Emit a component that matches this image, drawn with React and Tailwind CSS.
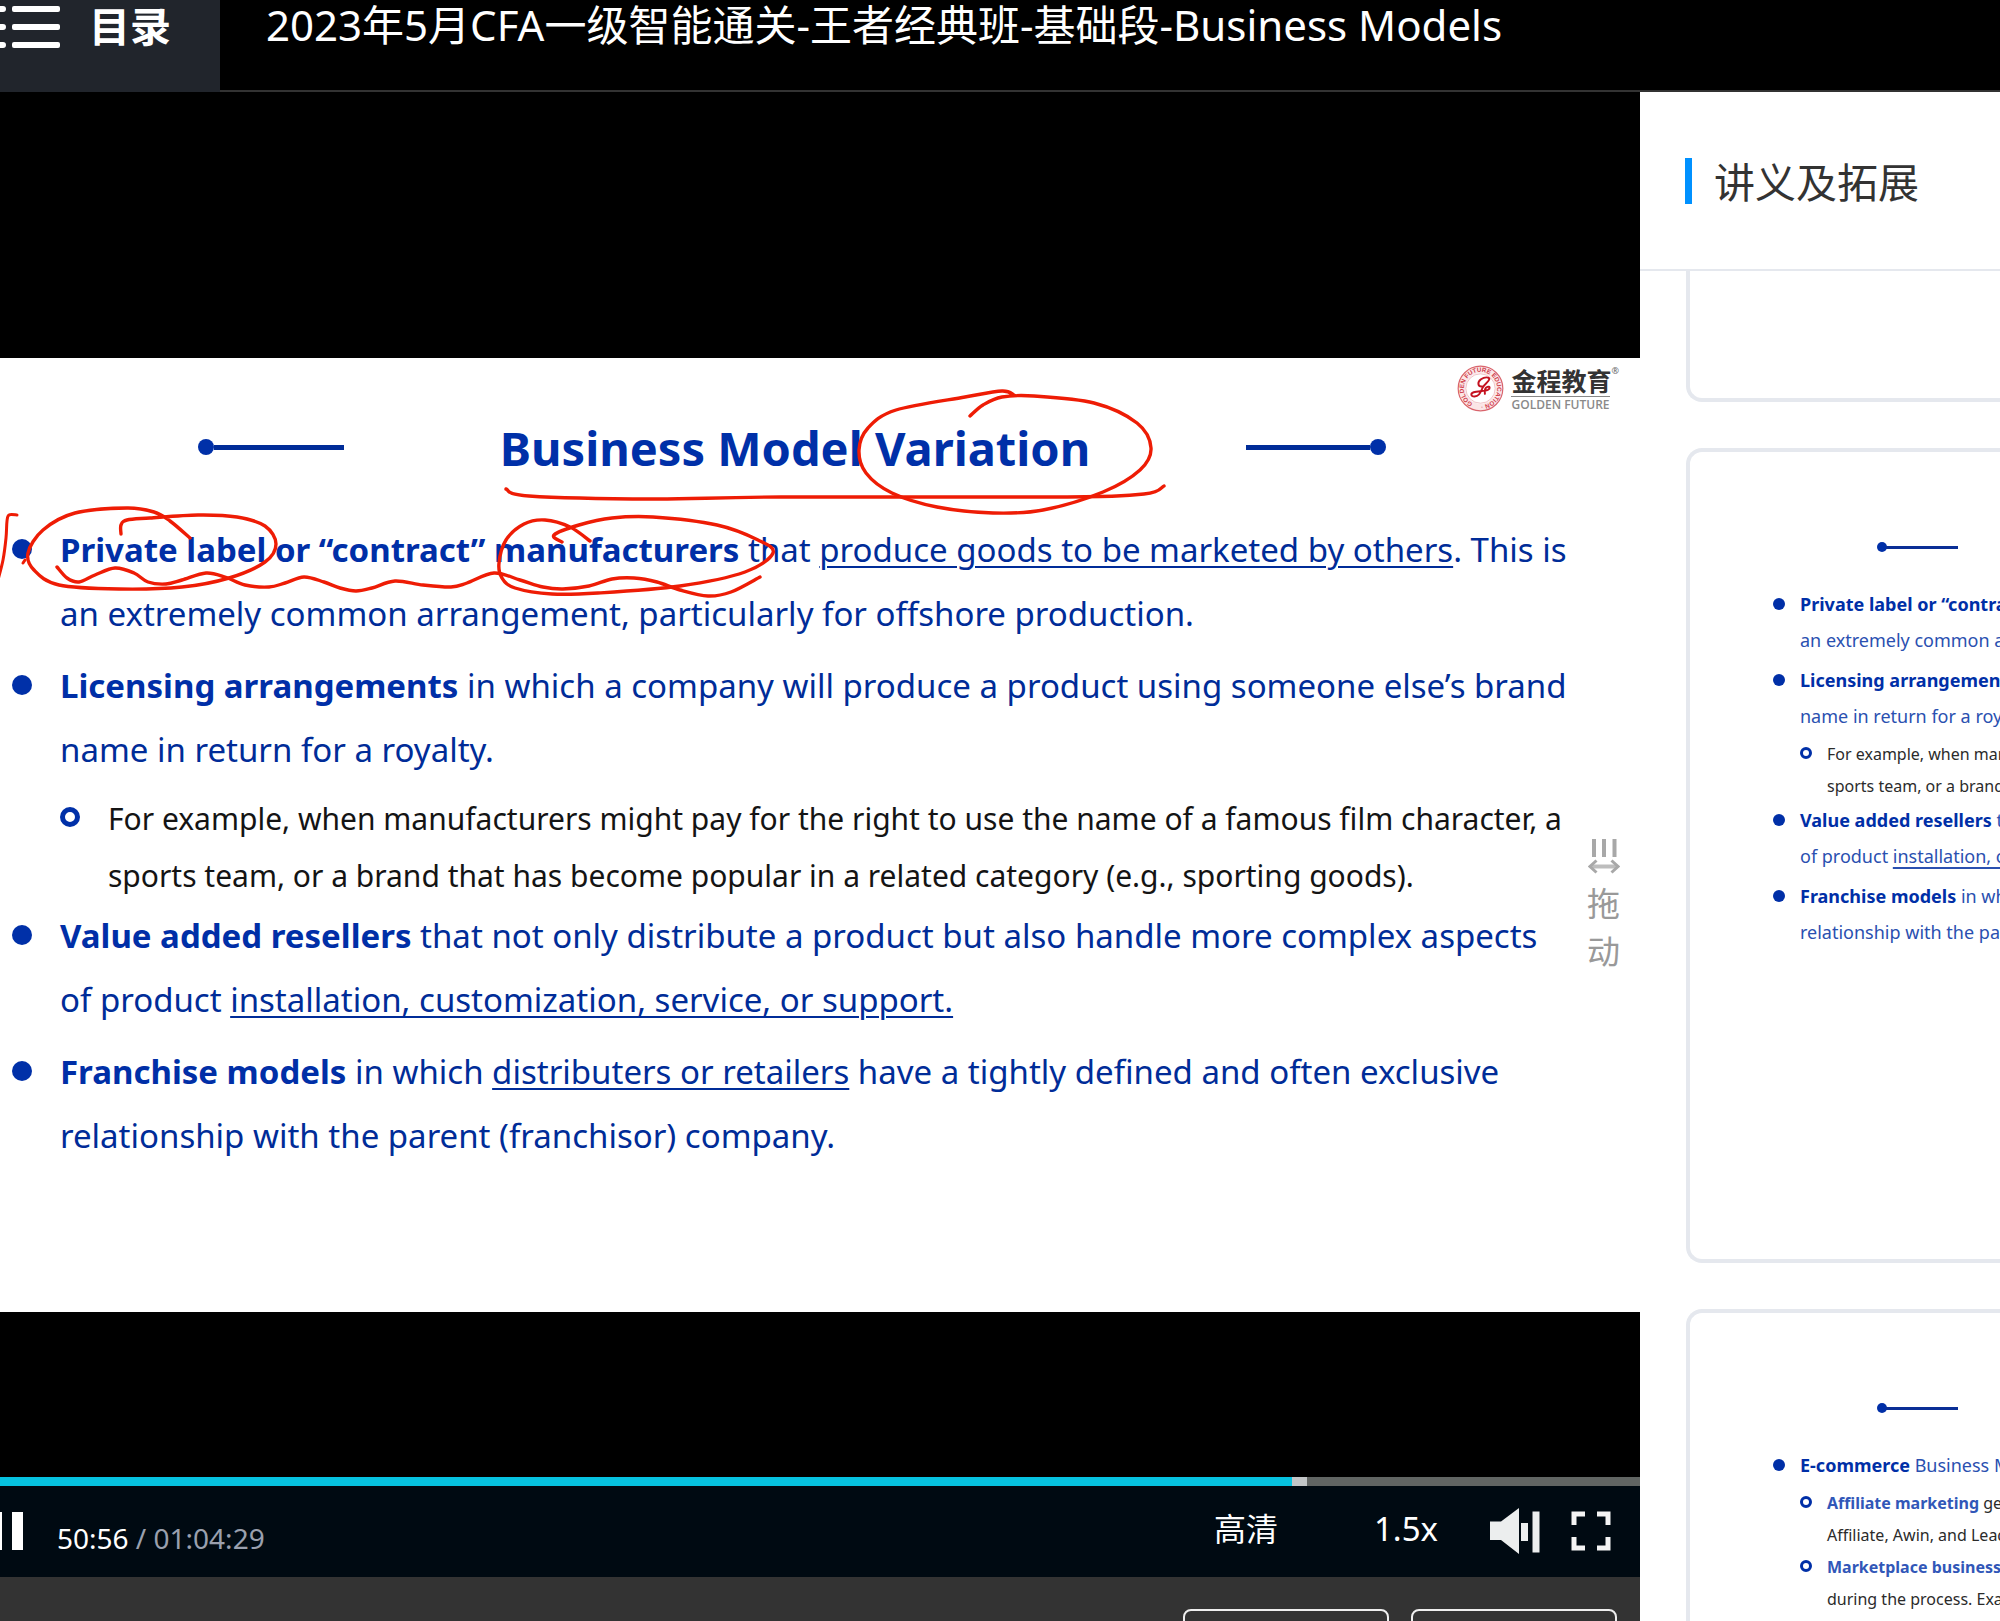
import React, { useState } from 'react';

const PEN_STROKES = [
  // margin tick
  { width: 3, points: [[17, 157], [9, 157], [7, 163], [6, 180], [3, 202], [-2, 222]] },
  { width: 3, points: [[25, 202], [23, 205]] },
  // "Private label"
  {
    width: 3.4,
    points: [
      [190, 180], [170, 163], [154, 154], [127, 150], [75, 155], [43, 172], [28, 195], [34, 212], [59, 227], [119, 231],
      [182, 229], [229, 220], [265, 204], [276, 186], [265, 168], [237, 159], [198, 157], [150, 160], [127, 162], [121, 167], [121, 176],
    ],
  },
  // wavy underline
  {
    width: 3.4,
    points: [
      [57, 209], [67, 220], [79, 224], [95, 217], [115, 210], [134, 215], [148, 224], [166, 226], [182, 222], [206, 215],
      [225, 219], [245, 227], [269, 229], [285, 225], [304, 219], [324, 224], [340, 230], [356, 233], [372, 230], [395, 223],
      [423, 227], [451, 229], [467, 225], [494, 215], [520, 222], [543, 229], [563, 231], [589, 228], [612, 221], [634, 220],
      [657, 224], [680, 232], [708, 238], [731, 234], [760, 219],
    ],
  },
  // "manufacturers"
  {
    width: 3.4,
    points: [
      [590, 183], [570, 169], [545, 162], [524, 166], [506, 182], [499, 205], [502, 220], [515, 230], [552, 236], [598, 235],
      [680, 228], [745, 214], [773, 195], [758, 182], [717, 167], [653, 159], [612, 160], [579, 167], [554, 177], [562, 184],
    ],
  },
  // title underline
  { width: 3.4, points: [[506, 131], [529, 138], [653, 141], [781, 139], [1057, 139], [1144, 136], [1164, 128]] },
  // "Variation"
  {
    width: 3.4,
    points: [
      [970, 58], [983, 47], [1002, 39], [1034, 38], [1094, 45], [1137, 65], [1151, 90], [1140, 112], [1103, 134], [1043, 152],
      [993, 155], [937, 149], [892, 135], [866, 115], [859, 92], [868, 70], [896, 52], [965, 39], [1002, 33], [1014, 37],
    ],
  },
];

const BUSINESS_MODELS = [
  {
    lines: [
      [{ b: 'Private label or “contract” manufacturers' }, ' that ', { u: 'produce goods to be marketed by others' }, '. This is'],
      ['an extremely common arrangement, particularly for offshore production.'],
    ],
  },
  {
    lines: [
      [{ b: 'Licensing arrangements' }, ' in which a company will produce a product using someone else’s brand'],
      ['name in return for a royalty.'],
    ],
    subs: [
      [
        ['For example, when manufacturers might pay for the right to use the name of a famous film character, a'],
        ['sports team, or a brand that has become popular in a related category (e.g., sporting goods).'],
      ],
    ],
  },
  {
    lines: [
      [{ b: 'Value added resellers' }, ' that not only distribute a product but also handle more complex aspects'],
      ['of product ', { u: 'installation, customization, service, or support.' }],
    ],
  },
  {
    lines: [
      [{ b: 'Franchise models' }, ' in which ', { u: 'distributers or retailers' }, ' have a tightly defined and often exclusive'],
      ['relationship with the parent (franchisor) company.'],
    ],
  },
];

const ECOMMERCE = [
  {
    lines: [[{ b: 'E-commerce' }, ' Business Models']],
    subs: [
      [[{ b: 'Affiliate marketing' }, ' generates commission'], ['Affiliate, Awin, and Leads']],
      [[{ b: 'Marketplace businesses' }, ' create networks'], ['during the process. Examples']],
    ],
  },
];

// Catmull-Rom spline through the recorded pen points
const toPath = (pts) => {
  let d = `M${pts[0][0]} ${pts[0][1]}`;
  for (let i = 0; i < pts.length - 1; i++) {
    const p0 = pts[i - 1] || pts[i];
    const p1 = pts[i];
    const p2 = pts[i + 1];
    const p3 = pts[i + 2] || p2;
    d += `C${p1[0] + (p2[0] - p0[0]) / 6} ${p1[1] + (p2[1] - p0[1]) / 6} ${p2[0] - (p3[0] - p1[0]) / 6} ${p2[1] - (p3[1] - p1[1]) / 6} ${p2[0]} ${p2[1]}`;
  }
  return d;
};

const PenLayer = () => (
  <svg className="absolute left-0 top-0 pointer-events-none" width="1200" height="260" fill="none" stroke="#ee1c05" strokeLinecap="round" strokeLinejoin="round">
    {PEN_STROKES.map((stroke, i) => (
      <path key={i} d={toPath(stroke.points)} strokeWidth={stroke.width} />
    ))}
  </svg>
);

const Line = ({ parts, boldClass = '' }) => (
  <span className="block whitespace-nowrap">
    {parts.map((part, i) => {
      if (part.b) return <strong key={i} className={`font-bold ${boldClass}`}>{part.b}</strong>;
      if (part.u) return <u key={i} className="underline decoration-2 underline-offset-4">{part.u}</u>;
      return <React.Fragment key={i}>{part}</React.Fragment>;
    })}
  </span>
);

const SlideList = ({ items }) => (
  <ul className="flex flex-col text-[33px] leading-[64px] text-[#002c98]">
    {items.map((item, i) => (
      <li key={i} className={items[i - 1]?.subs ? '' : 'mt-2'}>
        <div className="flex">
          <span className="w-5 h-5 mt-[21px] mr-7 shrink-0 rounded-full bg-[#0030a8]" />
          <div>{item.lines.map((line, j) => <Line key={j} parts={line} boldClass="text-[#002fa7]" />)}</div>
        </div>
        {item.subs?.map((sub, j) => (
          <div key={j} className="flex pl-12 mt-2 text-[30px] leading-[57px] text-[#141414]">
            <span className="w-5 h-5 mt-[17px] mr-7 shrink-0 rounded-full border-[5px] border-[#0030a8]" />
            <div>{sub.map((line, k) => <Line key={k} parts={line} />)}</div>
          </div>
        ))}
      </li>
    ))}
  </ul>
);

const HandoutCard = ({ items }) => (
  <article className="h-[815px] shrink-0 border-4 border-r-0 border-[#e5e8ee] rounded-l-2xl overflow-hidden pl-[83px] pt-[90px]">
    <div className="flex items-center ml-[104px] h-[10px]">
      <span className="w-[10px] h-[10px] rounded-full bg-[#002fa7]" />
      <span className="w-[72px] h-[3px] -ml-px bg-[#0a2f96]" />
    </div>
    <ul className="mt-[34px] text-[18px] leading-[36px] text-[#2a50b0]">
      {items.map((item, i) => (
        <li key={i} className={items[i - 1]?.subs ? '' : 'mt-1'}>
          <div className="flex">
            <span className="w-3 h-3 mt-3 mr-[15px] shrink-0 rounded-full bg-[#002fa7]" />
            <div>{item.lines.map((line, j) => <Line key={j} parts={line} boldClass="text-[#002fa7]" />)}</div>
          </div>
          {item.subs?.map((sub, j) => (
            <div key={j} className={`flex pl-[27px] text-[16px] leading-[32px] text-[#2b2b2b] ${j === 0 ? 'mt-1' : ''}`}>
              <span className="w-3 h-3 mt-[9px] mr-[15px] shrink-0 rounded-full border-[3px] border-[#002fa7]" />
              <div>{sub.map((line, k) => <Line key={k} parts={line} boldClass="text-[#3157b8]" />)}</div>
            </div>
          ))}
        </li>
      ))}
    </ul>
  </article>
);

const BrandLogo = () => (
  <div className="absolute right-[21px] top-[7px] flex items-center gap-[7px]">
    <svg width="47" height="47" viewBox="0 0 48 48" fill="none">
      <defs>
        <path id="seal-ring" d="M24 41a17 17 0 1 1 .1 0" />
      </defs>
      <circle cx="24" cy="24" r="19" stroke="#fbe6e7" strokeWidth="7" />
      <circle cx="24" cy="24" r="22.8" stroke="#d9646c" strokeWidth="1.2" />
      <circle cx="24" cy="24" r="15" stroke="#e9a9ad" strokeWidth="0.7" />
      <text fill="#d0404b" fontSize="6.4" fontWeight="700" fontFamily="Liberation Sans, sans-serif">
        <textPath href="#seal-ring" startOffset="8">GOLDEN FUTURE EDUCATION ·1995·</textPath>
      </text>
      <path
        d="M26 22C21 22.500 20.500 17.500 24.500 14.500C28 12 33.500 12 33 14.500C32.500 17.500 27.500 19.500 26 23.500C24.500 28 22.500 32 18 32.200C14 32.300 13.500 29 17 27.800C21 26.500 28 27 31.500 25.500C34.500 24 33.500 21.500 31 22.300C28.500 23.200 28 26 28.500 29.500"
        stroke="#c4121f"
        strokeWidth="2"
        strokeLinecap="round"
      />
    </svg>
    <div className="flex flex-col">
      <span className="flex items-start text-[25px] leading-[30px] font-bold text-[#333]">
        金程教育
        <span className="text-[9px] leading-[9px] font-normal text-[#666]">®</span>
      </span>
      <span className="w-[99px] border-t border-[#888] pt-px font-['Open_Sans'] text-[12px] leading-[14px] font-semibold text-[#8a8a8a] whitespace-nowrap">
        GOLDEN FUTURE
      </span>
    </div>
  </div>
);

const DragHandle = () => (
  <button type="button" className="absolute right-5 top-[480px] flex flex-col items-center text-[33px] leading-[48px] text-[#999] cursor-ew-resize">
    <svg width="32" height="36" viewBox="0 0 32 36" fill="none" stroke="#a8a8a8">
      <path d="M6 1v18M16 1v18M26.500 1v18" strokeWidth="4" />
      <path d="M4 28.500h24" strokeWidth="4" stroke="#bdbdbd" />
      <path d="M8.500 22.500L2 28.500l6.500 6M23.500 22.500l6.500 6-6.500 6" strokeWidth="3" />
    </svg>
    <span className="mt-1.5">拖</span>
    <span>动</span>
  </button>
);

const Slide = () => (
  <section className="relative h-[954px] shrink-0 bg-white overflow-hidden">
    <div className="flex items-center justify-between pl-[198px] pr-[254px] pt-[57px]">
      <span className="flex items-center">
        <span className="w-4 h-4 rounded-full bg-[#0030a8]" />
        <span className="w-[130px] h-[5px] bg-[#002c98]" />
      </span>
      <h2 className="pt-0.5 text-[47px] leading-[62px] font-bold text-[#0030a8] whitespace-nowrap">Business Model Variation</h2>
      <span className="flex items-center">
        <span className="w-[124px] h-[5px] bg-[#002c98]" />
        <span className="w-4 h-4 rounded-full bg-[#0030a8]" />
      </span>
    </div>
    <div className="pl-3 mt-[31px]">
      <SlideList items={BUSINESS_MODELS} />
    </div>
    <PenLayer />
    <BrandLogo />
    <DragHandle />
  </section>
);

const PlayerControls = () => {
  const [position, setPosition] = useState(3056);
  const [playing, setPlaying] = useState(true);

  return (
    <div className="shrink-0 bg-[#000a12]">
      <input
        type="range"
        aria-label="Seek"
        min="0"
        max="3869"
        value={position}
        onChange={(e) => setPosition(Number(e.target.value))}
        className="block w-full h-[9px] appearance-none cursor-pointer bg-[linear-gradient(to_right,#06c2e0_78.8%,#c2c6c7_78.8%,#c2c6c7_79.7%,#616563_79.7%)] [&::-webkit-slider-thumb]:appearance-none"
      />
      <div className="flex items-center h-[91px] pb-0.5 pr-[29px] text-white">
        <button type="button" aria-label="Pause" aria-pressed={playing} onClick={() => setPlaying(!playing)}>
          <svg width="24" height="38" viewBox="0 0 24 38" fill="#fff">
            <path d="M0 0h2v38H0zM12 0h11v38H12z" />
          </svg>
        </button>
        <p className="ml-[33px] pt-3.5 text-[28px] leading-[36px] whitespace-nowrap text-[#9aa0ae]">
          <span className="text-white">50:56</span> / 01:04:29
        </p>
        <button type="button" className="ml-auto pb-1 text-[32px] leading-[40px]">高清</button>
        <button type="button" className="ml-24 pb-1 text-[33px] leading-[40px]">1.5x</button>
        <button type="button" aria-label="Volume" className="ml-[52px]">
          <svg width="50" height="46" viewBox="0 0 50 46" fill="#eceeee">
            <path d="M0 13.500h11L29 0v46L11 32H0zM31 15h7v18h-7zM42.500 3.500h7v41h-7z" />
          </svg>
        </button>
        <button type="button" aria-label="Fullscreen" className="ml-[31px]">
          <svg width="40" height="40" viewBox="0 0 40 40" fill="none" stroke="#f4f4f4" strokeWidth="5">
            <path d="M3 14V3h11M26 3h11v11M37 26v11H26M14 37H3V26" />
          </svg>
        </button>
      </div>
    </div>
  );
};

const App = () => (
  <div className="h-screen flex flex-col overflow-hidden bg-black font-['Noto_Sans','Noto_Sans_CJK_SC',sans-serif]">
    <header className="flex h-[92px] shrink-0 text-white">
      <button type="button" className="flex items-start w-[220px] bg-[#21252c]">
        <svg className="mt-1.5 shrink-0" width="61" height="44" viewBox="0 0 61 44" fill="#fff">
          <path d="M0 0h3a3 3 0 0 1 0 6H0zM0 18h3a3 3 0 0 1 0 6H0zM0 36h3a3 3 0 0 1 0 6H0z" />
          <rect x="12" width="48" height="6" rx="2" />
          <rect x="12" y="18" width="48" height="6" rx="2" />
          <rect x="12" y="36" width="48" height="6" rx="2" />
        </svg>
        <span className="ml-7 text-[41px] leading-[52px] font-bold whitespace-nowrap">目录</span>
      </button>
      <h1 className="flex-1 pl-[46px] border-b-2 border-[#333] text-[42px] leading-[50px] whitespace-nowrap">
        2023年5月CFA一级智能通关-王者经典班-基础段-Business Models
      </h1>
    </header>

    <main className="flex flex-1 min-h-0">
      <div className="w-[82%] flex flex-col overflow-hidden">
        <div className="h-[266px] shrink-0" />
        <Slide />
        <div className="h-[165px] shrink-0" />
        <PlayerControls />
        <div className="flex-1 flex justify-end items-start gap-[22px] pt-8 pr-[23px] bg-[#333] overflow-hidden">
          <button type="button" aria-label="Notes" className="w-[206px] h-16 shrink-0 border-2 border-[#eee] rounded-lg" />
          <button type="button" aria-label="Questions" className="w-[206px] h-16 shrink-0 border-2 border-[#eee] rounded-lg" />
        </div>
      </div>

      <aside className="flex-1 min-w-0 flex flex-col bg-white overflow-hidden">
        <div className="flex items-center h-[179px] shrink-0 pl-[45px] border-b-2 border-[#e5e8ee]">
          <span className="w-[7px] h-[46px] bg-[#0091ff]" />
          <h2 className="ml-[22px] pt-0.5 text-[41px] leading-[48px] text-[#333] whitespace-nowrap">讲义及拓展</h2>
        </div>
        <div className="flex-1 min-h-0 flex flex-col gap-[46px] pl-[46px] overflow-hidden">
          <article className="h-[131px] shrink-0 border-4 border-t-0 border-r-0 border-[#e5e8ee] rounded-bl-2xl" />
          <HandoutCard items={BUSINESS_MODELS} />
          <HandoutCard items={ECOMMERCE} />
        </div>
      </aside>
    </main>
  </div>
);

export default App;
